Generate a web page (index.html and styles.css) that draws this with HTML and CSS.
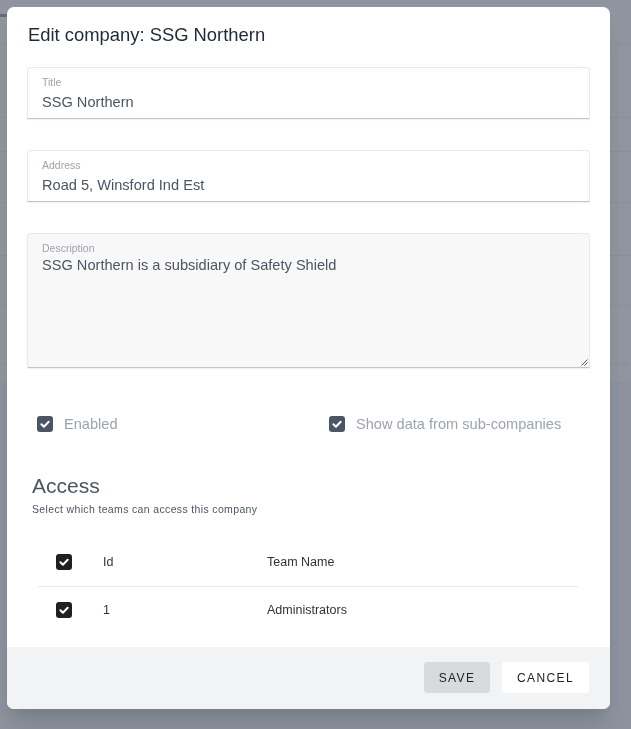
FILE: index.html
```html
<!DOCTYPE html>
<html lang="en">
<head>
<meta charset="utf-8">
<title>Edit company</title>
<link rel="stylesheet" href="styles.css">
</head>
<body>
<div class="page">
  <div class="page-header"><span class="tab-mark"></span></div>
  <div class="bg-row r1"></div>
  <div class="bg-row r2"></div>
  <div class="bg-row r3"></div>
  <div class="bg-row r4"></div>
  <div class="bg-row r5"></div>
  <div class="bg-row r6"></div>
  <div class="bg-row r7"></div>
</div>

<div class="overlay">
  <div class="modal">
    <div class="modal-body">
      <h2 class="modal-title">Edit company: SSG Northern</h2>

      <div class="field">
        <label class="field-label">Title</label>
        <div class="field-value">SSG Northern</div>
      </div>

      <div class="field">
        <label class="field-label">Address</label>
        <div class="field-value">Road 5, Winsford Ind Est</div>
      </div>

      <div class="field field-area">
        <label class="field-label">Description</label>
        <div class="field-value">SSG Northern is a subsidiary of Safety Shield</div>
        <svg class="resize" width="8" height="8" viewBox="0 0 8 8"><path d="M7.5 1.5L1.5 7.5M7.5 4.5L4.5 7.5" stroke="#555" stroke-width="1"/></svg>
      </div>

      <div class="checks">
        <div class="check">
          <span class="box"><svg width="12" height="12" viewBox="0 0 12 12"><path d="M2.4 6.3l2.5 2.4 4.8-5" fill="none" stroke="#fff" stroke-width="2" stroke-linecap="round" stroke-linejoin="round"/></svg></span>
          <span class="check-label">Enabled</span>
        </div>
        <div class="check">
          <span class="box"><svg width="12" height="12" viewBox="0 0 12 12"><path d="M2.4 6.3l2.5 2.4 4.8-5" fill="none" stroke="#fff" stroke-width="2" stroke-linecap="round" stroke-linejoin="round"/></svg></span>
          <span class="check-label">Show data from sub-companies</span>
        </div>
      </div>

      <h3 class="section-title">Access</h3>
      <p class="section-sub">Select which teams can access this company</p>

      <div class="teams">
        <div class="t-row t-head">
          <div class="t-cell t-sel"><span class="box box-dark"><svg width="12" height="12" viewBox="0 0 12 12"><path d="M2.4 6.3l2.5 2.4 4.8-5" fill="none" stroke="#fff" stroke-width="2" stroke-linecap="round" stroke-linejoin="round"/></svg></span></div>
          <div class="t-cell t-id">Id</div>
          <div class="t-cell t-name">Team Name</div>
        </div>
        <div class="t-row">
          <div class="t-cell t-sel"><span class="box box-dark"><svg width="12" height="12" viewBox="0 0 12 12"><path d="M2.4 6.3l2.5 2.4 4.8-5" fill="none" stroke="#fff" stroke-width="2" stroke-linecap="round" stroke-linejoin="round"/></svg></span></div>
          <div class="t-cell t-id">1</div>
          <div class="t-cell t-name">Administrators</div>
        </div>
      </div>
    </div>

    <div class="modal-footer">
      <button class="btn btn-save">Save</button>
      <button class="btn btn-cancel">Cancel</button>
    </div>
  </div>
</div>
</body>
</html>
```

FILE: styles.css
```css
* { box-sizing: border-box; }

html, body {
  margin: 0;
  padding: 0;
  height: 100%;
}

body {
  font-family: "Liberation Sans", Arial, sans-serif;
  background: #f3f4f6;
  overflow: hidden;
}

/* Background page behind the overlay */
.page {
  display: flex;
  flex-direction: column;
}
.page-header {
  height: 45px;
  background: #f9fafb;
  border-bottom: 1px solid #e5e7eb;
  padding-top: 14px;
}
.tab-mark {
  display: block;
  width: 8px;
  height: 3px;
  background: #4b5563;
}
.bg-row {
  background: #ffffff;
  border-bottom: 1px solid #e5e7eb;
}
.r1 { height: 73px; }
.r2 { height: 34px; }
.r3 { height: 51px; }
.r4 { height: 53px; }
.r5 { height: 50px; }
.r6 { height: 59px; }
.r7 { height: 17px; border-bottom: none; }

/* Overlay + modal */
.overlay {
  position: fixed;
  inset: 0;
  background: rgba(107, 114, 128, 0.75);
  padding: 7px 0 0 7px;
}

.modal {
  width: 603px;
  height: 702px;
  background: #ffffff;
  border-radius: 7px;
  overflow: hidden;
  display: flex;
  flex-direction: column;
  box-shadow: 0 20px 25px -5px rgba(0, 0, 0, 0.12), 0 10px 10px -5px rgba(0, 0, 0, 0.05);
}

.modal-body {
  flex: 1;
  padding: 14px 20px 0 20px;
}

.modal-title {
  margin: 0 0 18px 1px;
  font-size: 18.4px;
  line-height: 28px;
  font-weight: 400;
  color: #1f2937;
}

.field {
  position: relative;
  border: 1px solid #e7e7f8;
  border-bottom: 1px solid #c2c5d0;
  border-radius: 4px 4px 0 0;
  box-shadow: 0 1px 1px rgba(0, 0, 0, 0.06);
  padding: 7px 14px 5px 14px;
  height: 52px;
  margin-bottom: 31px;
  background: #fff;
}
.field-label {
  display: block;
  font-size: 10.5px;
  line-height: 14px;
  color: #9ca3af;
}
.field-value {
  margin-top: 3px;
  font-size: 14.6px;
  line-height: 20px;
  color: #4b5563;
}
.field-area {
  height: 135px;
  background: #f8f8f8;
  margin-bottom: 44px;
}
.field-area .field-value {
  margin-top: 0;
}
.resize {
  position: absolute;
  right: 1px;
  bottom: 1px;
}

/* Checkboxes */
.checks {
  display: grid;
  grid-template-columns: 292px 1fr;
  padding-left: 10px;
  margin-bottom: 36px;
}
.check {
  display: flex;
  align-items: center;
  gap: 11px;
  height: 24px;
}
.box {
  width: 16px;
  height: 16px;
  border-radius: 3px;
  background: #4b5563;
  display: flex;
  align-items: center;
  justify-content: center;
  flex: none;
}
.box-dark {
  background: #202020;
}
.check-label {
  font-size: 14.6px;
  color: #9ca3af;
}

/* Access section */
.section-title {
  margin: 0 0 0 5px;
  font-size: 21px;
  line-height: 28px;
  font-weight: 400;
  color: #4b5563;
}
.section-sub {
  margin: 1px 0 0 5px;
  font-size: 10.5px;
  line-height: 16px;
  letter-spacing: 0.35px;
  color: #4b5563;
}

.teams {
  margin: 20px 12px 0 11px;
}
.t-row {
  display: grid;
  grid-template-columns: 50px 164px 1fr;
  height: 46px;
  align-items: center;
}
.t-head {
  height: 50px;
  border-bottom: 1px solid #e5e7eb;
}
.t-cell {
  font-size: 12.5px;
  color: #333;
  padding-left: 15px;
}
.t-sel {
  padding-left: 18px;
  display: flex;
}

/* Footer */
.modal-footer {
  height: 62px;
  background: #f2f3f5;
  display: flex;
  justify-content: flex-end;
  align-items: flex-start;
  gap: 12px;
  padding: 15px 21px 0 0;
}
.btn {
  height: 31px;
  border: none;
  border-radius: 3px;
  font-family: "Liberation Sans", Arial, sans-serif;
  font-size: 12px;
  letter-spacing: 1.4px;
  text-transform: uppercase;
  color: #222;
  padding: 0;
  cursor: pointer;
}
.btn-save {
  width: 66px;
  background: #d9dadd;
}
.btn-cancel {
  width: 87px;
  background: #ffffff;
}
```
